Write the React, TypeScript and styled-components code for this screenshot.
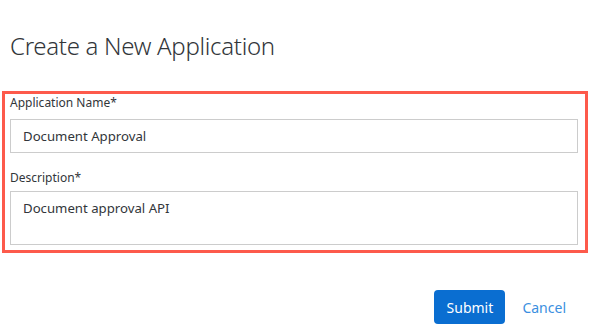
import React from "react";
import styled, { createGlobalStyle } from "styled-components";

const Global = createGlobalStyle`
  html, body { margin: 0; padding: 0; background: #ffffff; }
  body { font-family: "Noto Sans", "Open Sans", sans-serif; color: #32363a; }
  * { box-sizing: border-box; }
`;

const Page = styled.div`
  width: 591px;
  height: 335px;
  display: flex;
  flex-direction: column;
  padding: 0 3px 0 2px;
`;

const Title = styled.h1`
  margin: 30px 0 0 8px;
  font-size: 24px;
  line-height: 32px;
  font-weight: 300;
  color: #32363a;
  letter-spacing: -0.3px;
`;

const FormBox = styled.div`
  margin-top: 29px;
  border: 3px solid #fd5a4b;
  padding: 1px 7px 5px 5px;
  display: flex;
  flex-direction: column;
`;

const Label = styled.label<{ $gap: number }>`
  display: block;
  margin-top: ${(p) => p.$gap}px;
  font-size: 12px;
  line-height: 16px;
  color: #32363a;
`;

const Field = styled.div<{ $h: number; $top: number; $multi?: boolean }>`
  margin-top: ${(p) => p.$top}px;
  height: ${(p) => p.$h}px;
  border: 1px solid #cccccc;
  padding: ${(p) => (p.$multi ? "6px 12px" : "0 12px")};
  display: flex;
  align-items: ${(p) => (p.$multi ? "flex-start" : "center")};
  font-size: 13.2px;
  line-height: 20px;
  color: #32363a;
`;

const Footer = styled.div`
  margin-top: 37px;
  display: flex;
  justify-content: flex-end;
  align-items: center;
  gap: 17px;
  padding-right: 22px;
`;

const PrimaryButton = styled.button`
  width: 71px;
  height: 34px;
  border: none;
  border-radius: 4px;
  background: #0a6ed1;
  color: #ffffff;
  font-family: inherit;
  font-size: 14px;
  padding: 0;
`;

const LinkButton = styled.button`
  border: none;
  background: none;
  padding: 0;
  color: #3b8fe0;
  font-family: inherit;
  font-size: 14px;
`;

export default function App() {
  return (
    <>
      <Global />
      <Page>
        <Title>Create a New Application</Title>
        <FormBox>
          <Label $gap={0}>Application Name*</Label>
          <Field $top={8} $h={34}>Document Approval</Field>
          <Label $gap={17}>Description*</Label>
          <Field $top={5} $h={54} $multi>Document approval API</Field>
        </FormBox>
        <Footer>
          <PrimaryButton>Submit</PrimaryButton>
          <LinkButton>Cancel</LinkButton>
        </Footer>
      </Page>
    </>
  );
}
